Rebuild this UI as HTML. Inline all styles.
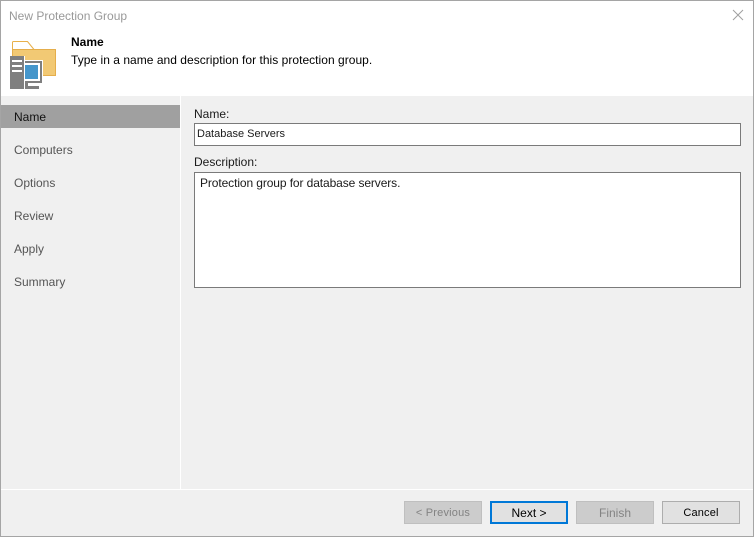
<!DOCTYPE html>
<html><head><meta charset="utf-8"><title>New Protection Group</title>
<style>
html,body{margin:0;padding:0;background:#f0f0f0}
body{width:754px;height:537px;position:relative;overflow:hidden;font:12px/15px "Liberation Sans",sans-serif;color:#1a1a1a}
.a{position:absolute;white-space:nowrap}
.b{position:absolute;box-sizing:border-box}
.nav{left:14px;color:#555}
.btn{position:absolute;top:501px;width:78px;height:23px;box-sizing:border-box;text-align:center;line-height:23px;border:1px solid #adadad;background:#e1e1e1;color:#000}
.dis{background:#ccc;border-color:#bfbfbf;color:#838383}
</style></head><body>
<div class="b" style="left:0;top:0;width:754px;height:96px;background:#fff"></div>
<div class="a" style="left:9px;top:9px;color:#999">New Protection Group</div>
<svg class="b" style="left:730px;top:7px" width="16" height="16" viewBox="0 0 16 16"><path d="M3 3l10 10M13 3l-10 10" stroke="#a0a0a0" stroke-width="1" fill="none"/></svg>
<svg class="b" style="left:0;top:30px" width="70" height="70" viewBox="0 0 70 70">
<path d="M12.500 19V12.500q0-1 1-1H27.500l6.500 8" fill="#fff" stroke="#e8b04a" stroke-width="1"/>
<rect x="12.500" y="19.500" width="43" height="26" fill="#f2c974" stroke="#e5ae4c"/>
<rect x="25" y="30" width="18" height="24" fill="#fff"/>
<rect x="10" y="26" width="14" height="33" fill="#7f7f7f"/>
<rect x="12" y="30" width="10" height="2" fill="#fff"/>
<rect x="12" y="35" width="10" height="2" fill="#fff"/>
<rect x="12" y="40" width="10" height="2" fill="#fff"/>
<rect x="24" y="26" width="1" height="33" fill="#fff"/>
<rect x="25" y="31" width="17" height="22" fill="#7f7f7f"/>
<rect x="25" y="33" width="15" height="18" fill="#fff"/>
<rect x="25" y="35" width="13" height="14" fill="#4596cb"/>
<rect x="25" y="53" width="3" height="6" fill="#7f7f7f"/>
<rect x="25" y="56" width="14" height="3" fill="#7f7f7f"/>
</svg>
<div class="a" style="left:71px;top:35px;font-weight:bold;color:#000">Name</div>
<div class="a" style="left:71px;top:53px;color:#000;letter-spacing:.03px">Type in a name and description for this protection group.</div>
<div class="b" style="left:1px;top:105px;width:179px;height:23px;background:#a0a0a0"></div>
<div class="b" style="left:180px;top:96px;width:1px;height:393px;background:#fff"></div>
<div class="a nav" style="top:110px;color:#111">Name</div>
<div class="a nav" style="top:143px">Computers</div>
<div class="a nav" style="top:176px">Options</div>
<div class="a nav" style="top:209px">Review</div>
<div class="a nav" style="top:242px">Apply</div>
<div class="a nav" style="top:275px">Summary</div>
<div class="a" style="left:194px;top:107px">Name:</div>
<div class="b" style="left:194px;top:123px;width:547px;height:23px;background:#fff;border:1px solid #7a7a7a"></div>
<div class="a" style="left:197px;top:127px;font-size:11px">Database Servers</div>
<div class="a" style="left:194px;top:155px">Description:</div>
<div class="b" style="left:194px;top:172px;width:547px;height:116px;background:#fff;border:1px solid #7a7a7a"></div>
<div class="a" style="left:200px;top:176px;letter-spacing:-.1px">Protection group for database servers.</div>
<div class="b" style="left:1px;top:489px;width:752px;height:1px;background:#fff"></div>
<div class="btn dis" style="left:404px;font-size:11px;letter-spacing:.2px">&lt; Previous</div>
<div class="btn" style="left:490px;border:2px solid #0078d7;line-height:21px">Next &gt;</div>
<div class="btn dis" style="left:576px">Finish</div>
<div class="btn" style="left:662px;font-size:11px;letter-spacing:.15px">Cancel</div>
<div class="b" style="left:0;top:0;width:754px;height:537px;border:1px solid #a5a5a5"></div>
</body></html>
